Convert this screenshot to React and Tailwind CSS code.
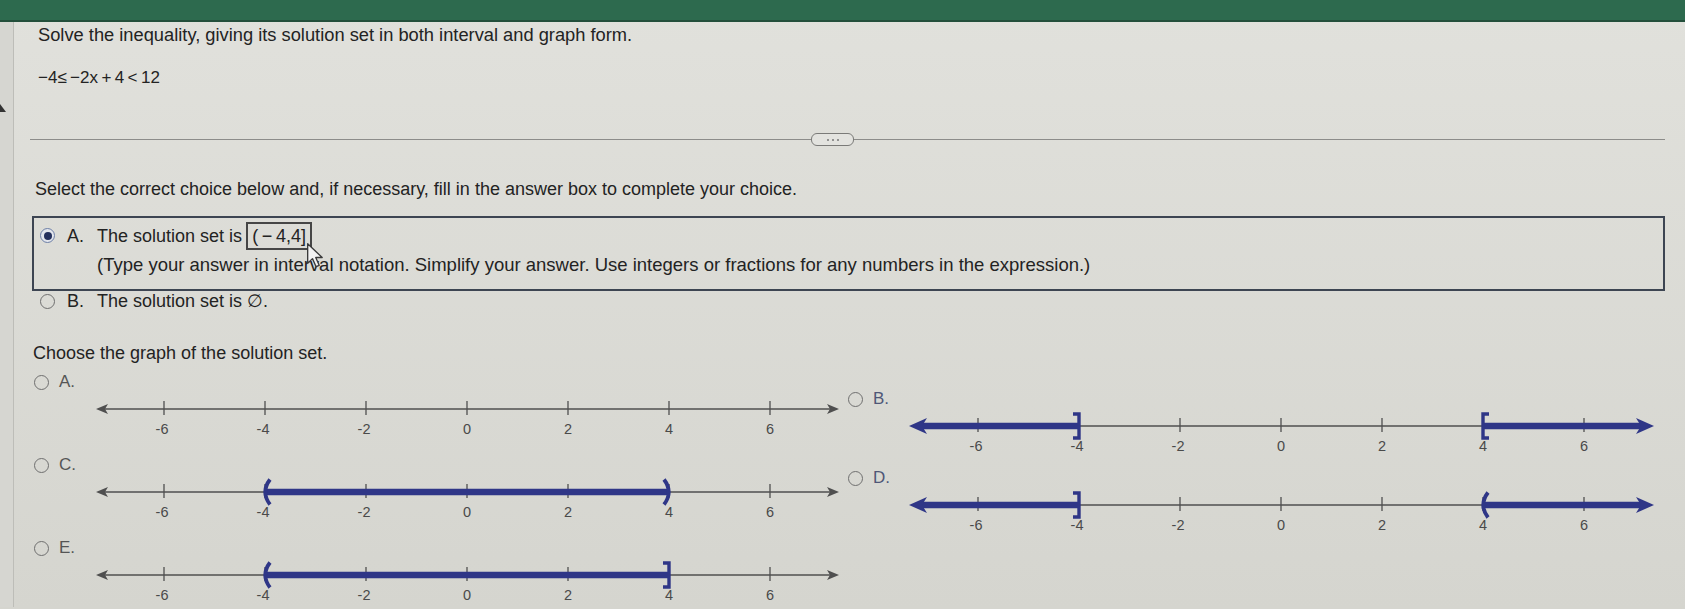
import React from "react";

const NAVY = "#2f3687";
const GRAY = "#4f4f4f";
const TICKS = [-6, -4, -2, 0, 2, 4, 6];
const X = (v) => 69 + (v + 6) * 50.5;
const LY = 14;

function Bracket({ type, x }) {
  const common = { fill: "none", stroke: NAVY, strokeWidth: 3.4, strokeLinecap: "butt" };
  if (type === "]") return <path d={`M${x - 6} 2 H${x} V26 H${x - 6}`} {...common} />;
  if (type === "[") return <path d={`M${x + 6} 2 H${x} V26 H${x + 6}`} {...common} />;
  if (type === "(") return <path d={`M${x + 5} 1.5 Q${x - 4.5} 14 ${x + 5} 26.5`} {...common} strokeWidth={3.8} />;
  return <path d={`M${x - 5} 1.5 Q${x + 4.5} 14 ${x - 5} 26.5`} {...common} strokeWidth={3.8} />;
}

function Graph({ segs = [], leftRay = false, rightRay = false, marks = [] }) {
  return (
    <svg width="745" height="44" viewBox="0 0 745 44" className="block overflow-visible">
      <line x1="6" y1={LY} x2="739" y2={LY} stroke={GRAY} strokeWidth="1.5" />
      {!leftRay && <polygon points={`1,${LY} 13,${LY - 5} 10,${LY} 13,${LY + 5}`} fill={GRAY} />}
      {!rightRay && <polygon points={`744,${LY} 732,${LY - 5} 735,${LY} 732,${LY + 5}`} fill={GRAY} />}
      {TICKS.map((t) => (
        <line key={t} x1={X(t)} y1={LY - 8} x2={X(t)} y2={LY + 6} stroke={GRAY} strokeWidth="1.3" />
      ))}
      {segs.map((s, i) => (
        <line key={i} x1={s[0]} y1={LY} x2={s[1]} y2={LY} stroke={NAVY} strokeWidth="6.5" />
      ))}
      {leftRay && <polygon points={`0,${LY} 18,${LY - 8} 13,${LY} 18,${LY + 8}`} fill={NAVY} />}
      {rightRay && <polygon points={`745,${LY} 727,${LY - 8} 732,${LY} 727,${LY + 8}`} fill={NAVY} />}
      {marks.map((m, i) => (
        <Bracket key={i} type={m[0]} x={m[1]} />
      ))}
      {TICKS.map((t) => (
        <text
          key={t}
          x={X(t) - (t < 0 ? 2 : 0)}
          y="38.5"
          textAnchor="middle"
          fontSize="14.5"
          fill="#4a4a4a"
          fontFamily="'Liberation Sans', Arial, sans-serif"
        >
          {t < 0 ? `-${-t}` : t}
        </text>
      ))}
    </svg>
  );
}

function Radio({ selected = false }) {
  if (selected)
    return (
      <div className="w-[15px] h-[15px] shrink-0 rounded-full border-[1.5px] border-[#6d7fa6] bg-[#e2e5ec] flex items-center justify-center">
        <div className="w-[8px] h-[8px] rounded-full bg-[#24305c]" />
      </div>
    );
  return <div className="w-[15px] h-[15px] shrink-0 rounded-full border-[1.5px] border-[#6f6f6f]" />;
}

function GraphOption({ letter, children, letterColor = "text-[#555555]" }) {
  return (
    <div>
      <div className="flex items-center h-[20px]">
        <Radio />
        <span className={`ml-[10px] text-[17px] leading-[20px] ${letterColor}`}>{letter}</span>
      </div>
      <div className="ml-[61px] mt-[3px]">{children}</div>
    </div>
  );
}

function Cursor() {
  return (
    <svg width="19" height="27" viewBox="0 0 17 24" className="block">
      <path
        d="M1.5 1.5 L1.5 19 L5.8 14.8 L9 22 L11.8 20.8 L8.7 13.8 L14.5 13.8 Z"
        fill="#f2f2f2"
        stroke="#3a3a3a"
        strokeWidth="1.2"
        strokeLinejoin="round"
      />
    </svg>
  );
}

export default function App() {
  const xm4 = X(-4);
  const x4 = X(4);
  return (
    <div className="relative w-[1685px] h-[609px] overflow-hidden bg-gradient-to-b from-[#e1e1dc] to-[#d5d5cf] font-['Liberation_Sans',Arial,sans-serif] text-[#232323]">
      <div className="h-[22px] bg-[#2d6a4e] border-b-2 border-[#234f3b]" />
      <div className="flex h-[585px]">
        <div className="relative w-[14px] shrink-0 bg-[#d6d6d1] border-r border-[#bdbdb8]">
          <svg width="8" height="10" className="absolute left-0 top-[80px]">
            <polygon points="0,10 0,2 6,10" fill="#333" />
          </svg>
        </div>
        <div className="flex-1 pl-[16px] pr-[20px]">
          <p className="ml-[8px] mt-[3px] text-[18.3px] leading-[20px]">
            Solve the inequality, giving its solution set in both interval and graph form.
          </p>
          <p className="ml-[8px] mt-[23px] text-[17px] leading-[20px]">−4≤&#8201;−2x&#8201;+&#8201;4&#8201;&lt;&#8201;12</p>

          <div className="mt-[45px] flex items-center h-[13px]">
            <div className="w-[781px] h-[1.5px] bg-[#8c8c8a]" />
            <div className="w-[43px] h-[13px] shrink-0 rounded-[6px] border border-[#7a7a78] bg-[#e3e3df] flex items-center justify-center gap-[3px]">
              <div className="w-[2px] h-[2px] rounded-full bg-[#777]" />
              <div className="w-[2px] h-[2px] rounded-full bg-[#777]" />
              <div className="w-[2px] h-[2px] rounded-full bg-[#777]" />
            </div>
            <div className="flex-1 h-[1.5px] bg-[#8c8c8a]" />
          </div>

          <p className="ml-[5px] mt-[33px] text-[18px] leading-[20px]">
            Select the correct choice below and, if necessary, fill in the answer box to complete your choice.
          </p>

          <div className="ml-[2px] mt-[17px] border-2 border-[#3d4552] pl-[6px] pt-[4px] pb-[14px]">
            <div className="flex items-center h-[27px]">
              <Radio selected />
              <span className="ml-[12px] w-[30px] text-[18px] leading-[20px]">A.</span>
              <span className="text-[18px] leading-[20px]">The solution set is</span>
              <div className="relative ml-[4px]">
                <div className="w-[66px] h-[28px] border-2 border-[#464646] flex items-center justify-center text-[18px] leading-[20px]">
                  (&#8201;−&#8201;4,4]
                </div>
                <div className="absolute left-[60px] top-[20px]">
                  <Cursor />
                </div>
              </div>
            </div>
            <p className="pl-[57px] mt-[6px] text-[18.5px] leading-[20px]">
              (Type your answer in interval notation. Simplify your answer. Use integers or fractions for any numbers in the expression.)
            </p>
          </div>

          <div className="mt-0 pl-[10px] flex items-center h-[20px]">
            <Radio />
            <span className="ml-[12px] w-[30px] text-[18px] leading-[20px]">B.</span>
            <span className="text-[18px] leading-[20px]">The solution set is ∅.</span>
          </div>

          <p className="ml-[3px] mt-[32px] text-[18px] leading-[20px]">Choose the graph of the solution set.</p>

          <div className="mt-[9px] flex">
            <div className="ml-[4px] w-[806px] shrink-0 flex flex-col gap-[16px]">
              <GraphOption letter="A.">
                <Graph />
              </GraphOption>
              <GraphOption letter="C.">
                <Graph
                  segs={[[xm4, x4]]}
                  marks={[
                    ["(", xm4],
                    [")", x4],
                  ]}
                />
              </GraphOption>
              <GraphOption letter="E.">
                <Graph
                  segs={[[xm4, x4]]}
                  marks={[
                    ["(", xm4],
                    ["]", x4],
                  ]}
                />
              </GraphOption>
            </div>
            <div className="ml-[8px] mt-[17px] flex flex-col gap-[12px]">
              <GraphOption letter="B." letterColor="text-[#4f5677]">
                <Graph
                  segs={[
                    [12, xm4],
                    [x4, 733],
                  ]}
                  leftRay
                  rightRay
                  marks={[
                    ["]", xm4],
                    ["[", x4],
                  ]}
                />
              </GraphOption>
              <GraphOption letter="D." letterColor="text-[#4f5677]">
                <Graph
                  segs={[
                    [12, xm4],
                    [x4, 733],
                  ]}
                  leftRay
                  rightRay
                  marks={[
                    ["]", xm4],
                    ["(", x4],
                  ]}
                />
              </GraphOption>
            </div>
          </div>
        </div>
      </div>
    </div>
  );
}
